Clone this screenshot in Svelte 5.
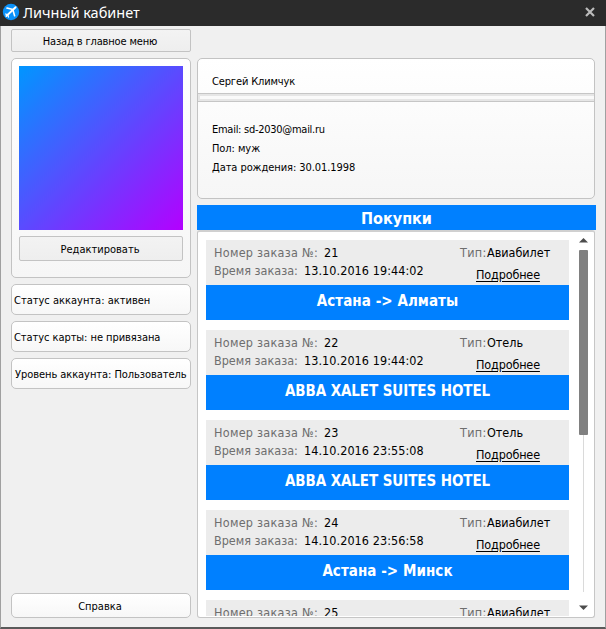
<script>
  const orders = [
    { id: 21, time: '13.10.2016 19:44:02', type: 'Авиабилет', title: 'Астана -> Алматы', kind: 'route' },
    { id: 22, time: '13.10.2016 19:44:02', type: 'Отель', title: 'ABBA XALET SUITES HOTEL', kind: 'hotel' },
    { id: 23, time: '14.10.2016 23:55:08', type: 'Отель', title: 'ABBA XALET SUITES HOTEL', kind: 'hotel' },
    { id: 24, time: '14.10.2016 23:56:58', type: 'Авиабилет', title: 'Астана -> Минск', kind: 'route' },
    { id: 25, type: 'Авиабилет' }
  ];
</script>

<div class="window">
  <header>
    <svg class="logo" width="18" height="18" viewBox="0 0 18 18">
      <circle cx="9" cy="9" r="8.2" fill="#0a91fa" />
      <g stroke="#fff" fill="none" stroke-linecap="round">
        <path d="M13.6 4.2L4.4 13" stroke-width="1.9" />
        <path d="M10.8 6.6L5 5.1M11 7.2l1.6 5.6" stroke-width="1.6" />
        <path d="M5.6 11.6l-2.2-.6M6 12l.5 2.2" stroke-width="1.1" />
      </g>
    </svg>
    <h1>Личный кабинет</h1>
    <svg class="close" width="10" height="10" viewBox="0 0 10 10">
      <path d="M1 1l8 8M9 1L1 9" stroke="#bcbcbc" stroke-width="2.2" />
    </svg>
  </header>
  <main>
    <aside>
      <button class="back"><span>Назад в главное меню</span></button>
      <section class="photo">
        <div class="avatar"></div>
        <button class="edit"><span>Редактировать</span></button>
      </section>
      <div class="status"><span>Статус аккаунта: активен</span></div>
      <div class="status card"><span>Статус карты: не привязана</span></div>
      <div class="status level"><span>Уровень аккаунта: Пользователь</span></div>
      <button class="help"><span>Справка</span></button>
    </aside>
    <div class="content">
      <section class="profile">
        <div class="name"><span>Сергей Климчук</span></div>
        <div class="divider"><i></i></div>
        <div class="details">
          <p class="mail">Email: sd-2030@mail.ru</p>
          <p>Пол: муж</p>
          <p>Дата рождения: 30.01.1998</p>
        </div>
      </section>
      <h2><span>Покупки</span></h2>
      <section class="list">
        <div class="orders">
          {#each orders as o (o.id)}
            <article>
              <div class="info">
                <div class="meta">
                  <p><span class="label num">Номер заказа №:</span><span>{o.id}</span></p>
                  {#if o.time}
                    <p><span class="label when">Время заказа:</span><span class="time">{o.time}</span></p>
                  {/if}
                </div>
                <div class="kind">
                  <p><span class="label tp">Тип:</span><span class="type">{o.type}</span></p>
                  {#if o.time}<a href="#{o.id}">Подробнее</a>{/if}
                </div>
              </div>
              {#if o.title}<h3 class={o.kind}><span>{o.title}</span></h3>{/if}
            </article>
          {/each}
        </div>
        <div class="scroll">
          <svg width="9" height="5" viewBox="0 0 9 5"><path d="M0 4.5L4.5 0 9 4.5z" fill="#4c4c4c" /></svg>
          <div class="track"><div class="thumb"></div></div>
          <svg width="9" height="5" viewBox="0 0 9 5"><path d="M0 .5L4.5 5 9 .5z" fill="#4c4c4c" /></svg>
        </div>
      </section>
    </div>
  </main>
</div>

<style>
  * { box-sizing: border-box; margin: 0; }
  .window {
    width: 606px; height: 629px; display: flex; flex-direction: column;
    background: #f0f0f0; color: #000; overflow: hidden;
    font: 11px/14px "DejaVu Sans Condensed", "DejaVu Sans", sans-serif; font-stretch: condensed;
  }
  span, p, a { white-space: nowrap; }
  header { height: 26px; flex: none; display: flex; background: #2b2b2b; padding: 3px 11px 0 2px; }
  h1 { font: 14.5px/18px "Noto Sans", "Open Sans", sans-serif; color: #fff; margin-left: 3px; letter-spacing: -0.02px; flex: 1; }
  .close { margin-top: 4px; }
  main {
    flex: 1; display: flex; gap: 6px; padding: 3px 9px 9px 10px;
    border: solid #a0a0a0; border-width: 0 1px; border-bottom: 2px solid #5a5a5a;
  }
  aside { width: 180px; flex: none; display: flex; flex-direction: column; gap: 6px; }
  button { font: inherit; color: inherit; padding: 2px 0 0; border: 1px solid #c3c3c3; display: flex; align-items: center; justify-content: center; }
  .back, .edit { background: linear-gradient(#f3f3f3, #eeeeee); border-radius: 2px; }
  .back { height: 23px; flex: none; letter-spacing: -0.14px; padding-right: 2px; }
  .photo { height: 220px; padding: 7px; border: 1px solid #c3c3c3; border-radius: 5px; background: linear-gradient(#fff, #f6f6f6); }
  .avatar { height: 164px; background: linear-gradient(135deg, #0096ff, #5a4bff 50%, #b400ff); }
  .edit { width: 100%; height: 25px; margin-top: 6px; padding-right: 2px; }
  .status { height: 31px; display: flex; align-items: center; padding: 2px 0 0 2px; border: 1px solid #c3c3c3; border-radius: 5px; background: linear-gradient(#fff, #f7f7f7); }
  .card { letter-spacing: -0.06px; }
  .level { padding-left: 3px; letter-spacing: -0.06px; }
  .help { height: 25px; margin-top: auto; border-radius: 5px; padding-right: 2px; background: linear-gradient(#fff, #f7f7f7); }
  .content { width: 399px; flex: none; display: flex; flex-direction: column; padding-top: 29px; }
  .profile { width: 398px; height: 141px; border: 1px solid #c3c3c3; border-radius: 5px; background: linear-gradient(#fff, #f6f6f6); }
  .name { height: 35px; padding: 16px 0 0 14px; border-bottom: 1px solid #c6c6c6; letter-spacing: -0.14px; }
  .divider { height: 7px; padding: 2px 0 2px 2px; background: #e6e6e6; }
  .divider i { display: block; height: 3px; background: #fafafa; }
  .details { border-top: 1px solid #c6c6c6; padding: 18px 0 0 14px; line-height: 19px; letter-spacing: -0.07px; }
  .mail { letter-spacing: -0.27px; }
  h2 { height: 25px; margin-top: 6px; background: #0080ff; color: #fff; font: bold 16px/27px "DejaVu Sans Condensed", "DejaVu Sans", sans-serif; font-stretch: condensed; text-align: center; }
  .list { width: 398px; height: 388px; display: flex; border: 1px solid #c6c6c6; border-top: 2px solid #d0d0d0; border-radius: 3px; background: #fff; padding: 0 6px 0 8px; overflow: hidden; }
  .orders { width: 363px; padding-top: 8px; height: 384px; overflow: hidden; display: flex; flex-direction: column; gap: 10px; }
  article { height: 80px; flex: none; font-size: 12.5px; }
  article:last-child { height: 16px; overflow: hidden; }
  .info { height: 45px; background: #ececec; display: flex; padding-left: 8px; }
  .meta { width: 246px; padding-top: 4px; line-height: 18px; }
  .kind { padding-top: 4px; line-height: 18px; }
  .label { display: inline-block; color: #6e6e6e; }
  .num { width: 110px; letter-spacing: 0.27px; }
  .when { width: 90px; letter-spacing: 0; }
  .time { letter-spacing: 0.07px; }
  .tp { width: 27px; letter-spacing: 0.3px; }
  .type { letter-spacing: -0.03px; }
  a { display: block; color: #000; margin: 4px 0 0 16px; letter-spacing: -0.15px; text-decoration: underline; text-underline-offset: 2px; }
  h3 { height: 35px; background: #0080ff; color: #fff; font: bold 15px/32px "DejaVu Sans Condensed", "DejaVu Sans", sans-serif; font-stretch: condensed; text-align: center; }
  .route { letter-spacing: 0.05px; }
  .hotel { letter-spacing: -0.08px; }
  .scroll { width: 9px; margin-left: auto; display: flex; flex-direction: column; padding: 6px 0 7px; }
  .scroll svg { display: block; flex: none; }
  .track { flex: 1; margin: 7px 0 13px 4px; width: 1px; background: #dadada; }
  .thumb { width: 9px; height: 185px; margin-left: -4px; background: #808080; border-radius: 1px; }
</style>
